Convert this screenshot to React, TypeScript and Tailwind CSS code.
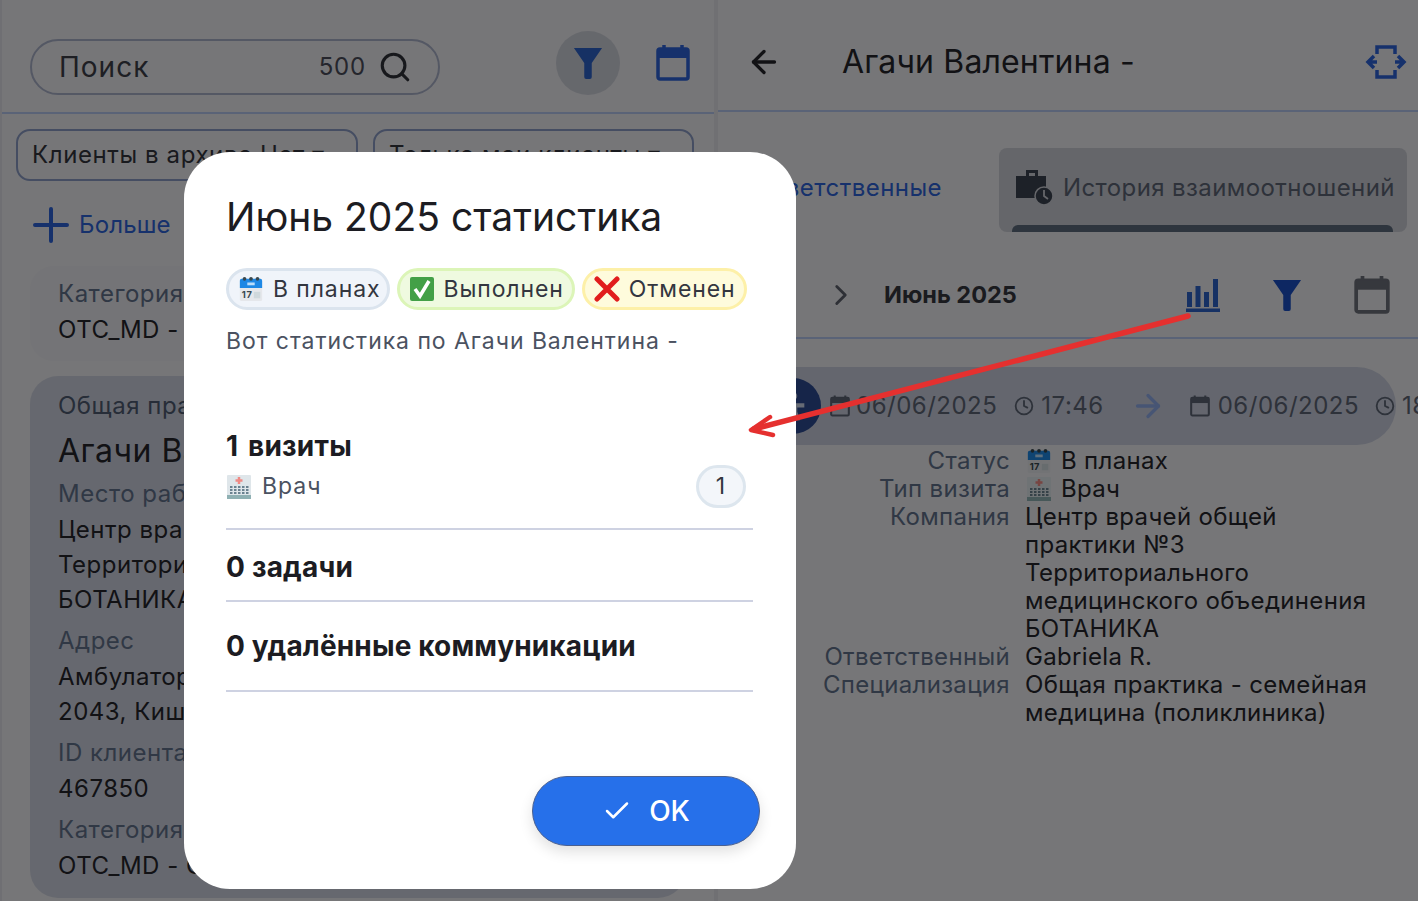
import { ArrowLeft, ArrowRight, Check, ChevronRight, Clock, Search } from "lucide-react";

const FONT = "font-['Inter','Liberation_Sans',sans-serif]";

function FilterIcon({ className }: { className: string }) {
  return (
    <svg viewBox="0 0 32 36" className={className} fill="currentColor">
      <path d="M1 2h30L20 18v15a2 2 0 0 1-2 2h-4a2 2 0 0 1-2-2V18z" />
    </svg>
  );
}

function CalendarSolid({ className }: { className: string }) {
  return (
    <svg viewBox="0 0 34 36" className={className} fill="none">
      <path d="M8 0v5M26 0v5" stroke="currentColor" strokeWidth="3.5" />
      <rect x="2" y="4" width="30" height="30" rx="2" stroke="currentColor" strokeWidth="3.5" />
      <rect x="2" y="4" width="30" height="9" fill="currentColor" />
    </svg>
  );
}

function CalendarEmoji({ className }: { className: string }) {
  return (
    <svg viewBox="0 0 26 28" className={className}>
      <rect x="1" y="3" width="24" height="24" rx="2" fill="#e5e7eb" />
      <path d="M1 5a2 2 0 0 1 2-2h20a2 2 0 0 1 2 2v8H1z" fill="#1e88e5" />
      <circle cx="6" cy="3" r="2" fill="#37474f" />
      <circle cx="13" cy="3" r="2" fill="#37474f" />
      <circle cx="20" cy="3" r="2" fill="#37474f" />
      <rect x="9" y="7" width="8" height="3" fill="#bbdefb" />
      <text x="3" y="24" fontSize="10" fontWeight="700" fill="#37474f" fontFamily="Inter">17</text>
      <rect x="16" y="17" width="7" height="7" fill="#cfd8dc" />
    </svg>
  );
}

function CheckEmoji({ className }: { className: string }) {
  return (
    <svg viewBox="0 0 26 26" className={className}>
      <rect x="1" y="1" width="24" height="24" rx="2" fill="#43a047" />
      <path d="M6 13l5 7L20 5" fill="none" stroke="#fff" strokeWidth="3.5" />
    </svg>
  );
}

function CrossEmoji({ className }: { className: string }) {
  return (
    <svg viewBox="0 0 26 26" className={className}>
      <path d="M3 3l20 20M23 3L3 23" fill="none" stroke="#e11d1d" strokeWidth="5" strokeLinecap="round" />
    </svg>
  );
}

function HospitalEmoji({ className }: { className: string }) {
  return (
    <svg viewBox="0 0 26 26" className={className}>
      <rect x="1" y="1" width="24" height="24" rx="1" fill="#dfe6ea" />
      <rect x="1" y="21" width="24" height="4" fill="#8fb0b3" />
      <path d="M13 3v7M9.500 6.500h7" stroke="#ef8a85" strokeWidth="2.500" />
      {[4, 8, 12, 16, 20].map((x) =>
        [12, 15, 18].map((y) => <rect key={`${x}-${y}`} x={x} y={y} width="2.500" height="2" fill="#6b8290" />)
      )}
    </svg>
  );
}

function DetailRow({ label, children }: { label: string; children: React.ReactNode }) {
  return (
    <div className="flex gap-[15px]">
      <div className="w-[200px] shrink-0 text-right text-[#60708a]">{label}</div>
      <div className="text-[#25252b]">{children}</div>
    </div>
  );
}

function Field({ label, lines }: { label: string; lines: string[] }) {
  return (
    <div className="mb-[6px]">
      <div className="text-[#60708a]">{label}</div>
      {lines.map((line) => (
        <div key={line} className="text-[#25252b] leading-[35px]">{line}</div>
      ))}
    </div>
  );
}

export default function App() {
  return (
    <div className={`relative flex h-[901px] w-[1418px] overflow-hidden bg-[#ececf0] ${FONT}`}>
      {/* Left list */}
      <div className="flex w-[714px] shrink-0 flex-col border-l-2 border-[#dfdfe6]">
        <div className="flex h-[114px] items-center border-b-2 border-[#b4c6ee] pl-[28px] pt-[22px]">
          <div className="flex h-[56px] w-[410px] items-center rounded-full border-2 border-[#a9b0c8] pl-[27px] pr-[26px]">
            <span className="flex-1 text-[28px] tracking-[1px] text-[#3d3f49]">Поиск</span>
            <span className="mr-[12px] text-[24px] tracking-[0.8px] text-[#4a4d5a]">500</span>
            <Search className="h-[34px] w-[34px] text-[#2f3138]" strokeWidth={2.2} />
          </div>
          <div className="-mt-[8px] ml-[116px] flex h-[64px] w-[64px] items-center justify-center rounded-full bg-[#cdd0d9]">
            <FilterIcon className="h-[34px] w-[30px] text-[#2c62c8]" />
          </div>
          <CalendarSolid className="-mt-[8px] ml-[36px] h-[36px] w-[34px] text-[#2c62d8]" />
        </div>
        <div className="flex gap-[15px] pl-[14px] pt-[15px]">
          <div className="flex h-[52px] w-[342px] items-center rounded-[14px] border-2 border-[#8a9bc4] pl-[14px] text-[24px] tracking-[0.6px] whitespace-nowrap text-[#33353d]">Клиенты в архиве Нет ▾</div>
          <div className="flex h-[52px] w-[321px] items-center rounded-[14px] border-2 border-[#8a9bc4] pl-[14px] text-[24px] tracking-[0.6px] whitespace-nowrap text-[#33353d]">Только мои клиенты ▾</div>
        </div>
        <div className="flex h-[44px] items-center gap-[10px] pl-[31px] mt-[22px] text-[24px] tracking-[0.15px] text-[#2c62d8]">
          <svg viewBox="0 0 36 36" className="h-[36px] w-[36px]" fill="none" stroke="currentColor" strokeWidth="4" strokeLinecap="round">
            <path d="M18 2v32M2 18h32" />
          </svg>
          <span>Больше</span>
        </div>
        <div className="mx-[28px] mt-[19px] h-[95px] rounded-[24px] bg-[#e8e8ee] pl-[28px] pt-[10px] text-[24px] tracking-[0.5px]">
          <div className="leading-[36px] text-[#60708a]">Категория</div>
          <div className="leading-[36px] text-[#25252b]">ОТС_MD -</div>
        </div>
        <div className="mx-[28px] mb-[3px] mt-[15px] flex-1 overflow-hidden whitespace-nowrap rounded-[28px] bg-[#cdd1de] pl-[28px] pt-[12px] text-[24px] tracking-[0.5px]">
          <div className="leading-[36px] text-[#4e5a70]">Общая практика</div>
          <div className="mt-[2px] text-[32px] leading-[50px] text-[#25252b]">Агачи Валентина</div>
          <Field label="Место работы" lines={["Центр врачей", "Территориального", "БОТАНИКА"]} />
          <Field label="Адрес" lines={["Амбулатория", "2043, Кишинёв"]} />
          <Field label="ID клиента" lines={["467850"]} />
          <Field label="Категория" lines={["ОТС_MD - Семейная"]} />
        </div>
      </div>

      {/* Right detail */}
      <div className="flex min-w-0 flex-1 flex-col border-l-4 border-[#e0e0e7]">
        <div className="flex h-[112px] items-center border-b-2 border-[#b4c6ee] pl-[28px] pr-[11px] pt-[14px]">
          <ArrowLeft className="h-[36px] w-[36px] text-[#25252b]" strokeWidth={2.2} />
          <span className="ml-[60px] flex-1 text-[32px] tracking-[0.15px] text-[#25252b]">Агачи Валентина -</span>
          <svg viewBox="0 0 42 34" className="h-[34px] w-[42px] text-[#2c62d8]" fill="none" stroke="currentColor" strokeWidth="3.5">
            <path d="M12 9V2h18v7M12 25v7h18v-7M9 11l-6 6 6 6M3 17h9M33 11l6 6-6 6M39 17h-9" />
          </svg>
        </div>
        <div className="flex h-[120px] items-start justify-end pr-[11px] pt-[36px]">
          <span className="mr-[57px] mt-[22px] text-[24px] tracking-[0.45px] whitespace-nowrap text-[#2c62d8]">Ответственные</span>
          <div className="relative flex h-[84px] w-[408px] items-center gap-[9px] rounded-[8px] bg-[#caccd4] pl-[17px] pb-[4px]">
            <svg viewBox="0 0 38 36" className="h-[38px] w-[38px] shrink-0 text-[#3b4350]" fill="currentColor">
              <path d="M10 0h12v6h8v22H0V6h10zm3 3v3h6V3z" />
              <circle cx="28" cy="26" r="9" stroke="#caccd4" strokeWidth="1.500" />
              <path d="M28 20v6l4 3" stroke="#caccd4" strokeWidth="1.800" fill="none" />
            </svg>
            <span className="text-[24px] tracking-[0.4px] whitespace-nowrap text-[#5c6474]">История взаимоотношений</span>
            <div className="absolute bottom-0 left-[13px] h-[7px] w-[381px] rounded-t-[6px] bg-[#5c6b7c]" />
          </div>
        </div>
        <div className="flex h-[107px] items-center border-b-2 border-[#b4c6ee] pl-[106px] pr-[28px] pt-[20px]">
          <ChevronRight className="h-[34px] w-[34px] text-[#5d606c]" strokeWidth={2} />
          <span className="ml-[26px] flex-1 text-[23.5px] font-bold text-[#35363e]">Июнь 2025</span>
          <svg viewBox="0 0 34 34" className="h-[34px] w-[34px] text-[#2c62c8]" fill="currentColor">
            <path d="M1 14h5v15H1zM9.500 8h5v21h-5zM18 14h5v15h-5zM27 1h5v28h-5zM0 30.500h34V34H0z" />
          </svg>
          <FilterIcon className="ml-[52px] h-[34px] w-[30px] text-[#1b4fc4]" />
          <CalendarSolid className="ml-[52px] h-[38px] w-[36px] text-[#6d707a]" />
        </div>
        <div className="ml-[30px] mt-[28px] flex h-[78px] w-[648px] shrink-0 items-center whitespace-nowrap rounded-r-full bg-[#c8cddd] pl-[17px] text-[24px] tracking-[0.5px] text-[#5c6474]">
          <div className="flex h-[56px] w-[56px] shrink-0 items-center justify-center rounded-full bg-[#2c4a92]">
            <svg viewBox="0 0 24 24" className="h-[34px] w-[34px] text-[#cdd6ea]" fill="currentColor">
              <circle cx="12" cy="5" r="3" />
              <path d="M4 10h16v3h-5v3l2 6h-3l-2-5-2 5H7l2-6v-3H4z" />
            </svg>
          </div>
          <CalendarSolid className="ml-[9px] h-[22px] w-[20px] shrink-0" />
          <span className="ml-[6px]">06/06/2025</span>
          <Clock className="ml-[17px] h-[20px] w-[20px] shrink-0" strokeWidth={2.2} />
          <span className="ml-[7px]">17:46</span>
          <ArrowRight className="ml-[26px] h-[36px] w-[36px] shrink-0 text-[#8eaae8]" strokeWidth={2.2} />
          <CalendarSolid className="ml-[24px] h-[22px] w-[20px] shrink-0" />
          <span className="ml-[8px]">06/06/2025</span>
          <Clock className="ml-[16px] h-[20px] w-[20px] shrink-0" strokeWidth={2.2} />
          <span className="ml-[7px]">18:00</span>
        </div>
        <div className="mt-[2px] flex flex-col pl-[92px] text-[24px] leading-[28px] tracking-[0.33px]">
          <DetailRow label="Статус">
            <span className="ml-[1px] flex items-center gap-[9px]"><CalendarEmoji className="h-[26px] w-[26px]" />В планах</span>
          </DetailRow>
          <DetailRow label="Тип визита">
            <span className="ml-[1px] flex items-center gap-[9px]"><HospitalEmoji className="h-[26px] w-[26px]" />Врач</span>
          </DetailRow>
          <DetailRow label="Компания">
            Центр врачей общей<br />практики №3<br />Территориального<br />медицинского объединения<br />БОТАНИКА
          </DetailRow>
          <DetailRow label="Ответственный">Gabriela R.</DetailRow>
          <DetailRow label="Специализация">Общая практика - семейная<br />медицина (поликлиника)</DetailRow>
        </div>
      </div>

      <div className="absolute inset-0 bg-black/50" />

      {/* Dialog */}
      <div className="absolute left-[184px] top-[152px] flex h-[737px] w-[612px] flex-col rounded-[46px] bg-white pl-[42px] pr-[43px] pt-[40px]">
        <h2 className="text-[39px] leading-[50px] text-[#1c1c22]">Июнь 2025 статистика</h2>
        <div className="mt-[26px] flex gap-[7px] text-[23px] tracking-[0.9px] text-[#33363f]">
          <span className="flex h-[42px] items-center gap-[9px] rounded-full border-[3px] border-[#dbe4ee] bg-[#f0f4fa] pl-[9px] pr-[7px]"><CalendarEmoji className="h-[26px] w-[26px]" />В планах</span>
          <span className="flex h-[42px] items-center gap-[8px] rounded-full border-[3px] border-[#dcf5b8] bg-[#effae0] pl-[9px] pr-[8px]"><CheckEmoji className="h-[26px] w-[26px]" />Выполнен</span>
          <span className="flex h-[42px] items-center gap-[9px] rounded-full border-[3px] border-[#fdf0a8] bg-[#fefbdc] pl-[9px] pr-[8px]"><CrossEmoji className="h-[26px] w-[26px]" />Отменен</span>
        </div>
        <p className="mt-[15px] text-[23px] leading-[32px] tracking-[0.95px] text-[#4b5261]">Вот статистика по Агачи Валентина -</p>

        <div className="mt-[71px] text-[28px] font-bold leading-[36px] tracking-[0.2px] [word-spacing:3px] text-[#1c1c22]">1 визиты</div>
        <div className="mt-[1px] flex h-[43px] items-center pr-[7px] text-[23px] tracking-[1px] text-[#4b5261]">
          <HospitalEmoji className="h-[26px] w-[26px]" />
          <span className="ml-[10px] flex-1">Врач</span>
          <span className="flex h-[43px] w-[50px] items-center justify-center rounded-full border-[3px] border-[#dde6ee] bg-[#f3f6fa] text-[#33363f]">1</span>
        </div>
        <div className="mt-[20px] h-[2px] bg-[#ced2e2]" />
        <div className="flex h-[70px] items-center pt-[3px] text-[28px] font-bold tracking-[0.2px] text-[#1c1c22]">0 задачи</div>
        <div className="h-[2px] bg-[#ced2e2]" />
        <div className="flex h-[88px] items-center text-[28px] font-bold tracking-[0.15px] text-[#1c1c22]">0 удалённые коммуникации</div>
        <div className="h-[2px] bg-[#ced2e2]" />
        <div className="mt-[84px] -mr-[7px] flex justify-end">
          <button className="flex h-[70px] w-[228px] items-center justify-center gap-[17px] rounded-full border border-[#4a6090] bg-[#2670ea] text-[28px] font-medium text-white shadow-[0_6px_14px_rgba(0,0,0,0.12)]">
            <Check className="h-[30px] w-[30px]" strokeWidth={2} />
            OK
          </button>
        </div>
      </div>

      {/* Annotation arrow */}
      <svg className="pointer-events-none absolute inset-0 h-[901px] w-[1418px]" viewBox="0 0 1418 901" fill="none">
        <path d="M1188 316L754 429" stroke="#e5302f" strokeWidth="5.500" strokeLinecap="round" />
        <path d="M770 417L751 430L773 435" stroke="#e5302f" strokeWidth="4.500" strokeLinecap="round" strokeLinejoin="round" />
      </svg>
    </div>
  );
}
